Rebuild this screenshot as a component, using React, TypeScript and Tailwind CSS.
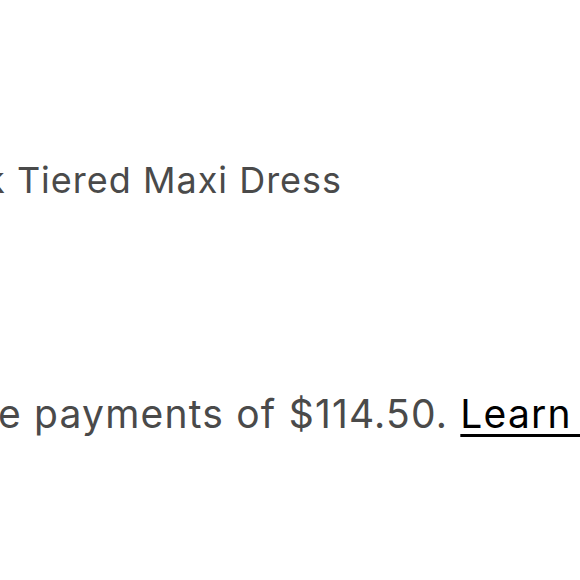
export default function App() {
  return (
    <div className="w-[580px] h-[580px] overflow-hidden bg-white font-['Inter',sans-serif]">
      <div className="pt-[160px] -ml-[15px] whitespace-nowrap text-[36px] leading-[40px] tracking-[1px] text-[#4a4a4a]">
        k Tiered Maxi Dress
      </div>
      <div className="mt-[194px] -ml-[2px] whitespace-nowrap text-[39px] leading-[40px] tracking-[1.2px] text-[#4a4a4a]">
        e payments of $114.50.{" "}
        <a href="#" className="text-black underline decoration-[3px] underline-offset-[6px]">
          Learn more
        </a>
      </div>
    </div>
  )
}
